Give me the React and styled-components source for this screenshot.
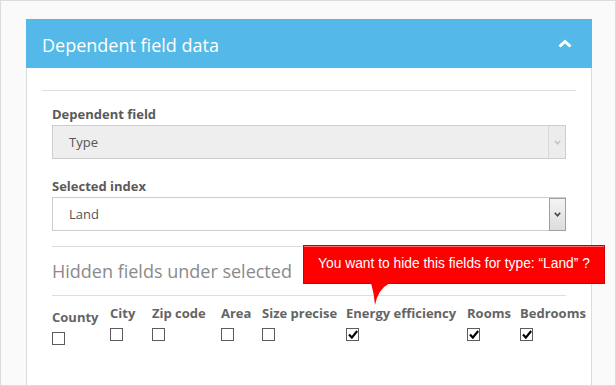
import React from "react";
import styled, { createGlobalStyle } from "styled-components";

const Global = createGlobalStyle`
  html, body { margin: 0; padding: 0; }
  body { font-family: "Open Sans", "Liberation Sans", sans-serif; background: #fafafa; }
`;

const Page = styled.div`
  box-sizing: border-box;
  width: 616px;
  height: 386px;
  border: 1px solid #dcdcdc;
  background: #fafafa;
  padding: 18px 0 0 25px;
  overflow: hidden;
`;

const Panel = styled.div`
  position: relative;
  width: 566px;
  height: 400px;
`;

const Header = styled.div`
  box-sizing: border-box;
  height: 49px;
  background: #54b9e8;
  display: flex;
  align-items: center;
  justify-content: space-between;
  padding: 0 20px 0 16px;
  color: #fff;
  font-size: 18px;
`;

const Title = styled.span`
  font-weight: 400;
  line-height: 24px;
  padding-top: 2px;
`;

const Body = styled.div`
  box-sizing: border-box;
  height: 360px;
  background: #fff;
  border-left: 1px solid #dcdcdc;
  border-right: 1px solid #dcdcdc;
  padding: 22px 15px 0;
`;

const Rule = styled.div`
  height: 1px;
  background: #dedede;
`;

const Inner = styled.div`
  padding: 0 10px;
`;

const Label = styled.div`
  font-size: 13px;
  font-weight: 700;
  line-height: 18px;
  color: #5a5a5a;
  margin-top: ${(p) => p.$top}px;
  margin-bottom: 2px;
`;

const SelectBox = styled.div`
  box-sizing: border-box;
  height: 34px;
  display: flex;
  align-items: stretch;
  border: 1px solid #cdcdcd;
  background: ${(p) => (p.$disabled ? "#eeeeee" : "#ffffff")};
`;

const SelectValue = styled.div`
  flex: 1;
  display: flex;
  align-items: center;
  padding-left: 16px;
  font-size: 13px;
  color: #555;
`;

const ArrowButton = styled.div`
  box-sizing: border-box;
  width: 17px;
  margin: ${(p) => (p.$disabled ? "0" : "0 -1px -1px 0")};
  display: flex;
  align-items: center;
  justify-content: center;
  border-left: 1px solid ${(p) => (p.$disabled ? "#d8d8d8" : "#a0a0a0")};
  ${(p) =>
    p.$disabled
      ? "background: #ececec;"
      : "border: 1px solid #a0a0a0; background: linear-gradient(#f4f4f4, #dcdcdc);"}
`;

const Divider = styled.div`
  height: 1px;
  background: #dedede;
  margin-top: ${(p) => p.$top || 0}px;
`;

const Heading = styled.div`
  font-size: 18px;
  line-height: 26px;
  color: #8a8a8a;
  padding: 11px 0;
`;

const FieldGrid = styled.div`
  display: grid;
  grid-template-columns: 58px 42px 69px 41px 84px 121px 53px auto;
  margin-top: 8px;
`;

const Cell = styled.div`
  display: flex;
  flex-direction: column;
  align-items: flex-start;
  padding-top: ${(p) => (p.$low ? 4 : 0)}px;
`;

const FieldName = styled.div`
  font-size: 13px;
  font-weight: 700;
  line-height: 18px;
  color: #646464;
  white-space: nowrap;
`;

const Box = styled.span`
  box-sizing: border-box;
  width: 13px;
  height: 13px;
  margin-top: 6px;
  border: 1px solid #5c5c5c;
  background: #fff;
  display: flex;
  align-items: center;
  justify-content: center;
`;

const Tooltip = styled.div`
  position: absolute;
  left: 277px;
  top: 226px;
  box-sizing: border-box;
  width: 302px;
  height: 39px;
  background: #ff0000;
  border: 1px solid #cf0000;
  box-shadow: inset 0 1px 0 rgba(255, 170, 170, 0.6);
  color: #fff;
  font-family: "Liberation Sans", Arial, sans-serif;
  font-size: 13.8px;
  display: flex;
  align-items: center;
  justify-content: center;
  padding-bottom: 2px;
`;

const Tail = styled.svg`
  position: absolute;
  left: 64px;
  top: 37px;
`;

const Chevron = () => (
  <svg width="14" height="9" viewBox="0 0 14 9">
    <polyline points="1.5,7.5 7,2.5 12.5,7.5" fill="none" stroke="#fff" strokeWidth="3" />
  </svg>
);

const SmallChevron = ({ color }) => (
  <svg width="7" height="5" viewBox="0 0 7 5">
    <polyline points="0.8,0.8 3.5,3.8 6.2,0.8" fill="none" stroke={color} strokeWidth="1.6" />
  </svg>
);

const Check = () => (
  <svg width="10" height="9" viewBox="0 0 10 9">
    <path d="M1,4.6 L3.8,7.6 L9.2,1" fill="none" stroke="#000" strokeWidth="2.2" />
  </svg>
);

const fields = [
  { name: "County", checked: false, low: true },
  { name: "City", checked: false },
  { name: "Zip code", checked: false },
  { name: "Area", checked: false },
  { name: "Size precise", checked: false },
  { name: "Energy efficiency", checked: true },
  { name: "Rooms", checked: true },
  { name: "Bedrooms", checked: true },
];

export default function App() {
  return (
    <>
      <Global />
      <Page>
        <Panel>
          <Header>
            <Title>Dependent field data</Title>
            <Chevron />
          </Header>
          <Body>
            <Rule />
            <Inner>
              <Label $top={14}>Dependent field</Label>
              <SelectBox $disabled>
                <SelectValue>Type</SelectValue>
                <ArrowButton $disabled>
                  <SmallChevron color="#c4c4c4" />
                </ArrowButton>
              </SelectBox>
              <Label $top={18}>Selected index</Label>
              <SelectBox>
                <SelectValue>Land</SelectValue>
                <ArrowButton>
                  <SmallChevron color="#444" />
                </ArrowButton>
              </SelectBox>
              <Divider $top={15} />
              <Heading>Hidden fields under selected</Heading>
              <Divider />
              <FieldGrid>
                {fields.map((f) => (
                  <Cell key={f.name} $low={f.low}>
                    <FieldName>{f.name}</FieldName>
                    <Box>{f.checked && <Check />}</Box>
                  </Cell>
                ))}
              </FieldGrid>
            </Inner>
          </Body>
          <Tooltip>
            You want to hide this fields for type: “Land” ?
            <Tail width="24" height="24" viewBox="0 0 24 24">
              <path d="M3,0 L22,0 Q10,6 7,22 Q6,10 3,0 Z" fill="#ff0000" />
            </Tail>
          </Tooltip>
        </Panel>
      </Page>
    </>
  );
}
